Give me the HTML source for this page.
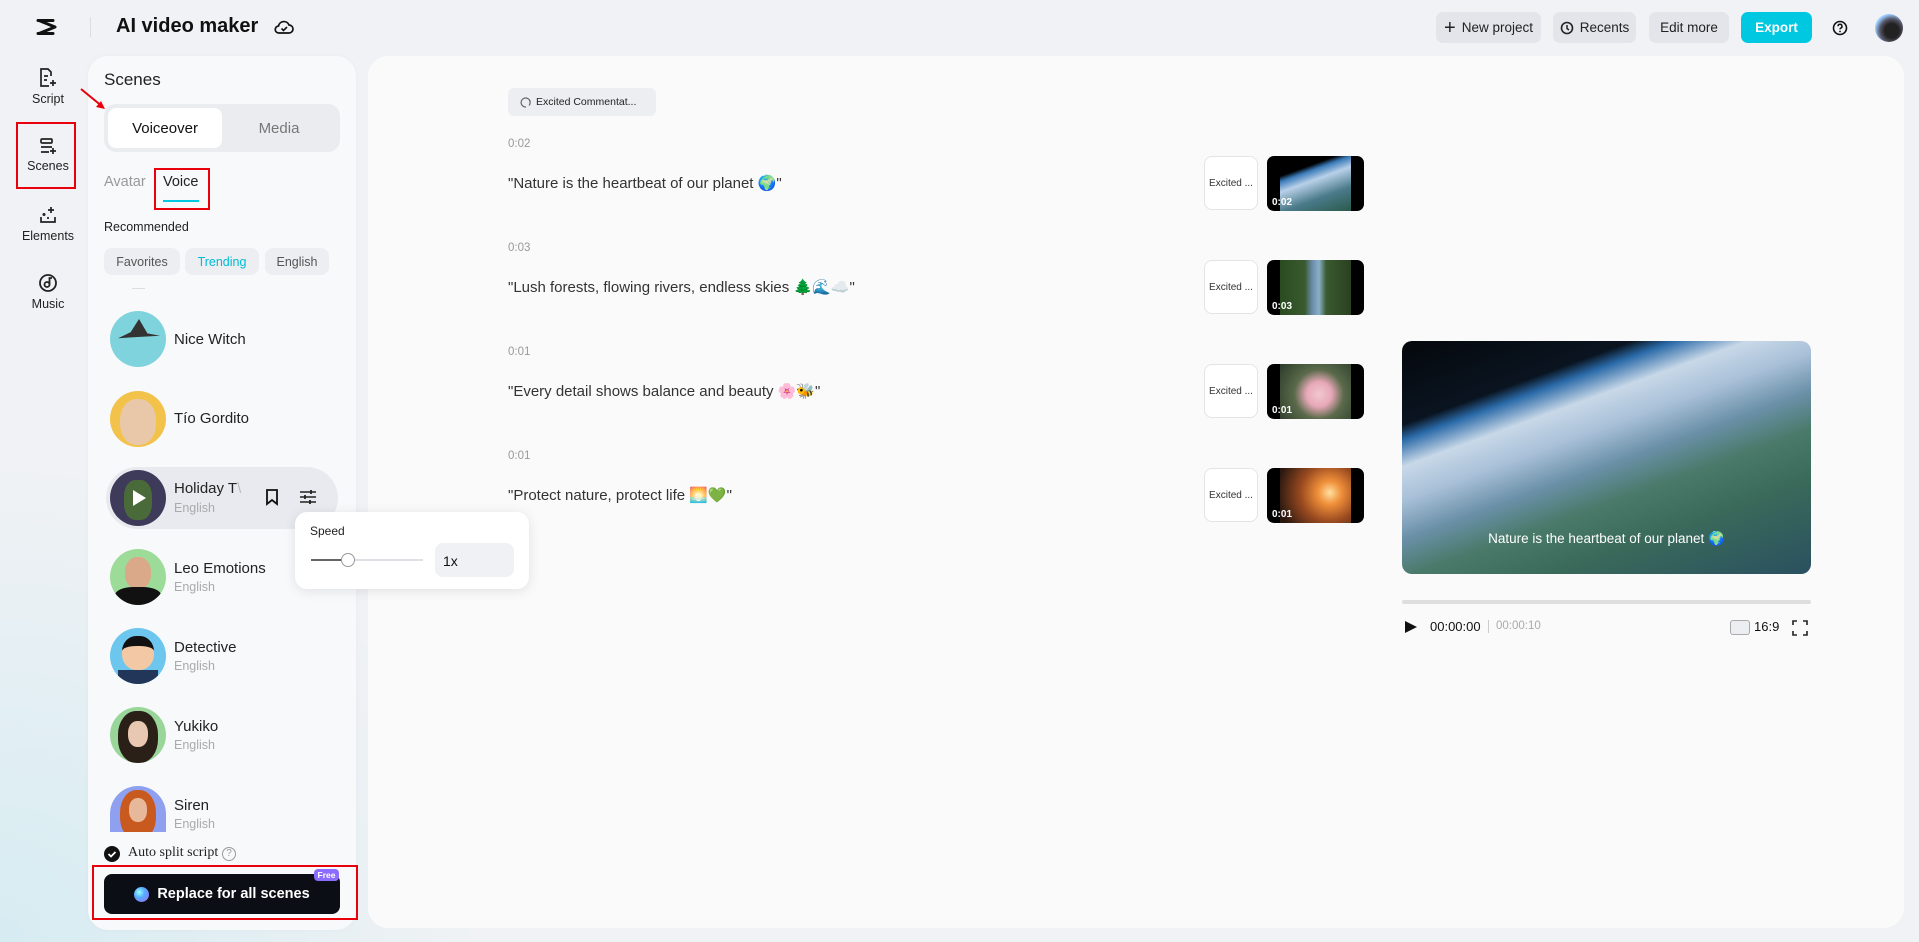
<!DOCTYPE html>
<html><head><meta charset="utf-8"><style>
*{box-sizing:border-box;margin:0;padding:0}
body{width:1919px;height:942px;overflow:hidden;font-family:"Liberation Sans",sans-serif;color:#111;position:relative;
background:radial-gradient(ellipse 500px 500px at 0px 942px,#d6ecf2 0%,rgba(214,236,242,0) 100%),#f1f2f5;}
.a{position:absolute}
.nav{position:absolute;width:88px;text-align:center;font-size:12.5px;color:#222}
.nav svg{display:block;margin:0 auto 4px}
.btn{position:absolute;top:12px;height:31px;border-radius:7px;background:#e3e5ea;font-size:13.5px;display:flex;align-items:center;justify-content:center;gap:6px;color:#222}
.chip{position:absolute;top:248px;height:27px;border-radius:8px;background:#eceef1;font-size:12.5px;color:#555;display:flex;align-items:center;justify-content:center}
.av{position:absolute;left:110px;width:56px;height:56px;border-radius:50%;overflow:hidden}
.nm{position:absolute;left:174px;font-size:15px;color:#222}
.lg{position:absolute;left:174px;font-size:12.5px;color:#aaa}
.t{position:absolute;left:508px;font-size:11.5px;color:#999}
.q{position:absolute;left:508px;font-size:15px;color:#333}
.ex{position:absolute;left:1204px;width:54px;height:54px;border:1px solid #e2e4e8;border-radius:8px;background:#fff;font-size:10px;color:#333;display:flex;align-items:center;justify-content:center}
.th{position:absolute;left:1267px;width:97px;height:55px;border-radius:7px;background:#000;overflow:hidden}
.th i{position:absolute;left:13px;top:0;width:71px;height:55px}
.th b{position:absolute;left:5px;bottom:3px;font-size:10px;color:#fff}
.red{position:absolute;border:2px solid #e8000b}
</style></head><body>

<!-- main panel (behind) -->
<div class="a" style="left:368px;top:56px;width:1536px;height:872px;border-radius:20px;background:#fafafb"></div>

<!-- top bar -->
<svg class="a" style="left:35px;top:18px" width="24" height="18" viewBox="0 0 24 18"><path d="M3 2.5h15M3 15.5h15M4 2.5l16 6.5-16 6.5" fill="none" stroke="#111" stroke-width="3" stroke-linejoin="round" stroke-linecap="round"/></svg>
<div class="a" style="left:90px;top:17px;width:1px;height:20px;background:#ddd"></div>
<div class="a" style="left:116px;top:15px;font-size:20px;font-weight:bold;color:#111">AI video maker</div>
<svg class="a" style="left:274px;top:18px" width="20" height="18" viewBox="0 0 20 18"><path d="M5 15h10a4 4 0 0 0 0-8 5.5 5.5 0 0 0-10.5 1A3.5 3.5 0 0 0 5 15z" fill="none" stroke="#111" stroke-width="1.7"/><path d="M7.5 10.5l2 2 3.5-3.5" fill="none" stroke="#111" stroke-width="1.6"/></svg>

<div class="btn" style="left:1436px;width:105px"><span style="font-size:20px;line-height:1">+</span>New project</div>
<div class="btn" style="left:1553px;width:83px"><svg width="14" height="14" viewBox="0 0 14 14"><circle cx="7" cy="7" r="5.5" fill="none" stroke="#222" stroke-width="1.6"/><path d="M7 4v3.5l2 1.5" fill="none" stroke="#222" stroke-width="1.5"/></svg>Recents</div>
<div class="btn" style="left:1649px;width:80px">Edit more</div>
<div class="btn" style="left:1741px;width:71px;background:#00c8e0;color:#fff;font-weight:bold">Export</div>
<svg class="a" style="left:1832px;top:20px" width="16" height="16" viewBox="0 0 16 16"><circle cx="8" cy="8" r="6.5" fill="none" stroke="#111" stroke-width="1.6"/><path d="M6 6.3a2 2 0 1 1 2.6 1.9c-.5.2-.6.5-.6 1.2" fill="none" stroke="#111" stroke-width="1.5"/><circle cx="8" cy="11.5" r=".9" fill="#111"/></svg>
<div class="a" style="left:1875px;top:14px;width:28px;height:28px;border-radius:50%;background:radial-gradient(circle at 60% 60%,#222 30%,#556 50%,#9cf 70%,#eee 100%)"></div>

<!-- left nav -->
<div class="nav" style="left:4px;top:68px"><svg width="18" height="20" viewBox="0 0 18 20"><path d="M12 8V4l-3-3H2v17h8" fill="none" stroke="#222" stroke-width="1.7"/><path d="M5 8h4M5 12h3M14 12v6M11 15h6" stroke="#222" stroke-width="1.7"/></svg>Script</div>
<div class="nav" style="left:4px;top:137px"><svg width="18" height="18" viewBox="0 0 18 18"><rect x="2" y="2" width="11" height="4" rx="1" fill="none" stroke="#222" stroke-width="1.7"/><path d="M2 10h11M2 15h8M14 11v6M11 14h6" stroke="#222" stroke-width="1.7"/></svg>Scenes</div>
<div class="red" style="left:16px;top:122px;width:60px;height:67px"></div>
<div class="nav" style="left:4px;top:205px"><svg width="18" height="20" viewBox="0 0 18 20"><path d="M2 12v5h14v-5M12 2v6M9 5h6M5 8v3M3.5 9.5h3M8 13h2" stroke="#222" stroke-width="1.7" fill="none"/></svg>Elements</div>
<div class="nav" style="left:4px;top:273px"><svg width="20" height="20" viewBox="0 0 20 20"><circle cx="10" cy="10" r="8" fill="none" stroke="#222" stroke-width="1.8"/><circle cx="9" cy="11.5" r="2.5" fill="none" stroke="#222" stroke-width="1.8"/><path d="M11.5 11.5V5h2.5" fill="none" stroke="#222" stroke-width="1.8"/></svg>Music</div>

<!-- scenes panel -->
<div class="a" style="left:88px;top:56px;width:268px;height:874px;border-radius:20px;background:#f8f9fb;box-shadow:0 0 6px rgba(0,0,0,.03)"></div>
<div class="a" style="left:104px;top:70px;font-size:17px;color:#222">Scenes</div>
<svg class="a" style="left:78px;top:86px" width="32" height="26"><path d="M3 3l22 18" stroke="#e8000b" stroke-width="2"/><path d="M27 23l-9-2 5-6z" fill="#e8000b"/></svg>
<div class="a" style="left:104px;top:104px;width:236px;height:48px;border-radius:12px;background:#eaecef"></div>
<div class="a" style="left:108px;top:108px;width:114px;height:40px;border-radius:8px;background:#fff;font-size:15px;display:flex;align-items:center;justify-content:center">Voiceover</div>
<div class="a" style="left:222px;top:108px;width:114px;height:40px;font-size:15px;color:#777;display:flex;align-items:center;justify-content:center">Media</div>
<div class="a" style="left:104px;top:174px;font-size:14.5px;color:#999">Avatar</div>
<div class="a" style="left:163px;top:174px;font-size:14.5px;color:#222">Voice</div>
<div class="a" style="left:163px;top:200px;width:36px;height:2px;background:#00c8e0"></div>
<div class="red" style="left:154px;top:168px;width:56px;height:42px"></div>
<div class="a" style="left:104px;top:220px;font-size:12.5px;color:#222">Recommended</div>
<div class="chip" style="left:104px;width:76px">Favorites</div>
<div class="chip" style="left:185px;width:74px;color:#00bcd6">Trending</div>
<div class="chip" style="left:265px;width:64px">English</div>
<div class="a" style="left:132px;top:288px;width:13px;height:1px;background:#ddd"></div>

<div class="av" style="top:311px;background:#7fd3dc"><div style="position:absolute;left:8px;top:8px;width:42px;height:24px;background:#333;clip-path:polygon(50% 0,70% 60%,100% 70%,0 80%,30% 55%)"></div></div>
<div class="nm" style="top:331px">Nice Witch</div>
<div class="av" style="top:391px;background:#f2c24a"><div style="position:absolute;left:10px;top:8px;width:36px;height:46px;border-radius:45%;background:#e8c8a8"></div></div>
<div class="nm" style="top:410px">Tío Gordito</div>

<div class="a" style="left:106px;top:467px;width:232px;height:62px;border-radius:31px;background:#e8eaef"></div>
<div class="av" style="top:470px;background:#3e3a5a"><div style="position:absolute;left:14px;top:10px;width:28px;height:40px;border-radius:40%;background:#4a6a3a"></div><div style="position:absolute;left:23px;top:20px;border-left:13px solid #fff;border-top:8px solid transparent;border-bottom:8px solid transparent"></div></div>
<div class="nm" style="top:480px">Holiday T<span style="color:#bbb">\</span></div>
<div class="lg" style="top:501px">English</div>
<svg class="a" style="left:265px;top:488px" width="14" height="18" viewBox="0 0 14 18"><path d="M2 2h10v14l-5-4-5 4z" fill="none" stroke="#111" stroke-width="1.8"/></svg>
<svg class="a" style="left:299px;top:489px" width="18" height="16" viewBox="0 0 18 16"><path d="M1 3h16M1 8h16M1 13h16" stroke="#222" stroke-width="1.6"/><path d="M12 1v4M6 6v4M11 11v4" stroke="#222" stroke-width="1.8"/></svg>

<div class="av" style="top:549px;background:#9ddc98"><div style="position:absolute;left:15px;top:8px;width:26px;height:32px;border-radius:45%;background:#d9a98a"></div><div style="position:absolute;left:5px;top:38px;width:46px;height:20px;border-radius:40% 40% 0 0;background:#111"></div></div>
<div class="nm" style="top:560px">Leo Emotions</div>
<div class="lg" style="top:580px">English</div>
<div class="av" style="top:628px;background:#6cc6ee"><div style="position:absolute;left:12px;top:8px;width:32px;height:34px;border-radius:45%;background:#f2c9a4;border-top:10px solid #111"></div><div style="position:absolute;left:8px;top:42px;width:40px;height:16px;background:#22365a"></div></div>
<div class="nm" style="top:639px">Detective</div>
<div class="lg" style="top:659px">English</div>
<div class="av" style="top:707px;background:#9ad69a"><div style="position:absolute;left:8px;top:4px;width:40px;height:52px;border-radius:45%;background:#2a2018"></div><div style="position:absolute;left:18px;top:14px;width:20px;height:26px;border-radius:45%;background:#e8c8b0"></div></div>
<div class="nm" style="top:718px">Yukiko</div>
<div class="lg" style="top:738px">English</div>
<div class="av" style="top:786px;height:46px;border-radius:28px 28px 0 0;background:#8fa0f0"><div style="position:absolute;left:10px;top:4px;width:36px;height:50px;border-radius:45%;background:#c85a20"></div><div style="position:absolute;left:19px;top:12px;width:18px;height:24px;border-radius:45%;background:#e8b89a"></div></div>
<div class="nm" style="top:797px">Siren</div>
<div class="lg" style="top:817px">English</div>

<div class="a" style="left:104px;top:846px;width:16px;height:16px;border-radius:50%;background:#111"><svg width="16" height="16"><path d="M4.5 8l2.5 2.5 4.5-4.5" stroke="#fff" stroke-width="1.8" fill="none"/></svg></div>
<div class="a" style="left:128px;top:845px;font-family:'Liberation Serif',serif;font-size:14px;color:#222">Auto split script</div>
<div class="a" style="left:222px;top:847px;width:14px;height:14px;border-radius:50%;border:1px solid #999;font-size:10px;color:#999;text-align:center;line-height:12px">?</div>
<div class="a" style="left:104px;top:874px;width:236px;height:40px;border-radius:8px;background:#0b0e14;color:#fff;font-size:14.5px;font-weight:bold;display:flex;align-items:center;justify-content:center;gap:8px"><span style="width:15px;height:15px;border-radius:50%;background:radial-gradient(circle at 35% 35%,#9ff 0%,#5af 40%,#a6f 100%)"></span>Replace for all scenes</div>
<div class="a" style="left:314px;top:869px;width:25px;height:12px;border-radius:4px;background:#8c6cff;color:#fff;font-size:8.5px;font-weight:bold;text-align:center;line-height:12px">Free</div>
<div class="red" style="left:92px;top:865px;width:266px;height:55px"></div>

<!-- speed popup (on top) -->
<div class="a" style="left:295px;top:512px;width:234px;height:77px;border-radius:12px;background:#fff;box-shadow:0 2px 12px rgba(0,0,0,.1)"></div>
<div class="a" style="left:310px;top:524px;font-size:12px;color:#222">Speed</div>
<div class="a" style="left:311px;top:559px;width:112px;height:2px;background:#dde0e4"></div>
<div class="a" style="left:311px;top:559px;width:36px;height:2px;background:#666"></div>
<div class="a" style="left:341px;top:553px;width:14px;height:14px;border-radius:50%;background:#fff;border:1px solid #999"></div>
<div class="a" style="left:435px;top:543px;width:79px;height:34px;border-radius:8px;background:#eff1f4;font-size:14px;padding:10px 8px;color:#111">1x</div>

<!-- main content -->
<div class="a" style="left:508px;top:88px;width:148px;height:28px;border-radius:6px;background:#eceef1;font-size:10.5px;color:#222;display:flex;align-items:center;padding-left:12px;gap:4px"><svg width="12" height="14" viewBox="0 0 12 14"><path d="M6 12a4.5 4.5 0 1 1 3-1.5M10 5v3" fill="none" stroke="#666" stroke-width="1.2"/></svg>Excited Commentat...</div>

<div class="t" style="top:138px">0:02</div>
<div class="q" style="top:174px">"Nature is the heartbeat of our planet 🌍"</div>
<div class="ex" style="top:156px">Excited ...</div>
<div class="th" style="top:156px"><i style="background:linear-gradient(160deg,#000 25%,#3a7ab8 32%,#b8d0e8 45%,#4a7a8a 70%,#2a5a4a)"></i><b>0:02</b></div>

<div class="t" style="top:242px">0:03</div>
<div class="q" style="top:278px">"Lush forests, flowing rivers, endless skies 🌲🌊☁️"</div>
<div class="ex" style="top:260px">Excited ...</div>
<div class="th" style="top:260px"><i style="background:linear-gradient(90deg,#2a4a20 0%,#3a5a30 35%,#6a8aa8 45%,#8ab0c8 55%,#3a5a30 65%,#2a4020)"></i><b>0:03</b></div>

<div class="t" style="top:346px">0:01</div>
<div class="q" style="top:382px">"Every detail shows balance and beauty 🌸🐝"</div>
<div class="ex" style="top:364px">Excited ...</div>
<div class="th" style="top:364px"><i style="background:radial-gradient(circle at 55% 55%,#f0c8d0 0%,#e8a8b8 25%,#5a6a4a 50%,#2a3a2a 100%)"></i><b>0:01</b></div>

<div class="t" style="top:450px">0:01</div>
<div class="q" style="top:486px">"Protect nature, protect life 🌅💚"</div>
<div class="ex" style="top:468px">Excited ...</div>
<div class="th" style="top:468px"><i style="background:radial-gradient(circle at 70% 45%,#ffe0a0 0%,#f0903a 20%,#9a4a20 50%,#2a1810 90%)"></i><b>0:01</b></div>

<!-- preview -->
<div class="a" style="left:1402px;top:341px;width:409px;height:233px;border-radius:10px;overflow:hidden;background:linear-gradient(160deg,#05080c 0%,#0a1420 22%,#2a6aa8 26%,#c8d8e8 33%,#a8c0d8 42%,#6a90a8 52%,#4a7a6a 62%,#3a6a5a 75%,#2a5060 100%)">
<div style="position:absolute;left:0;right:0;top:190px;text-align:center;color:#fff;font-size:13.5px">Nature is the heartbeat of our planet 🌍</div></div>
<div class="a" style="left:1402px;top:600px;width:409px;height:4px;border-radius:2px;background:#dedede"></div>
<svg class="a" style="left:1404px;top:620px" width="14" height="14"><path d="M1 1l12 6-12 6z" fill="#111"/></svg>
<div class="a" style="left:1430px;top:619px;font-size:13px;color:#111">00:00:00</div>
<div class="a" style="left:1488px;top:620px;width:1px;height:13px;background:#ccc"></div>
<div class="a" style="left:1496px;top:620px;font-size:11.5px;color:#aaa">00:00:10</div>
<div class="a" style="left:1730px;top:620px;width:20px;height:15px;border:1px solid #aaa;border-radius:3px;background:#eceef1"></div>
<div class="a" style="left:1754px;top:619px;font-size:13px;color:#111">16:9</div>
<svg class="a" style="left:1792px;top:620px" width="16" height="16" viewBox="0 0 16 16"><path d="M1 5V1h4M11 1h4v4M15 11v4h-4M5 15H1v-4" fill="none" stroke="#222" stroke-width="1.6"/></svg>
</body></html>
